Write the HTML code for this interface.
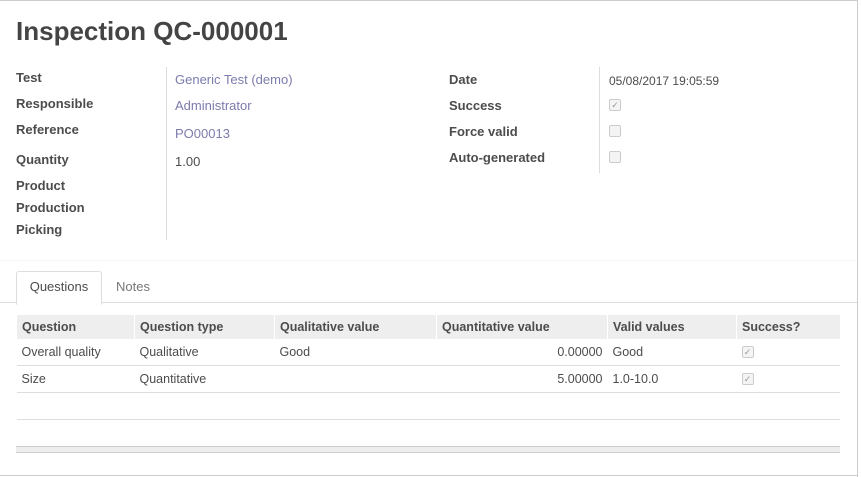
<!DOCTYPE html><html><head><style>
body{margin:0;width:861px;height:477px;background:#fff;font-family:"Liberation Sans",sans-serif;font-size:13px;color:#4c4c4c;position:relative;overflow:hidden}
.a{position:absolute}
.l{font-weight:bold;color:#4c4c4c}
.v{color:#7c7bad}
.cb{width:10px;height:10px;border:1px solid #ccc;border-radius:2px;background:#f4f4f4}
table{border-collapse:collapse;font-size:12.5px;table-layout:fixed}
td,th{padding:0 5px;text-align:left;white-space:nowrap;overflow:hidden}
th{background:#eee;height:24px;font-weight:bold;border-left:1px solid #fff}
td{height:26px;border-bottom:1px solid #ddd}
</style></head><body>
<div class="a" style="left:0;top:0;width:857px;height:1px;background:#ccc"></div>
<div class="a" style="left:857px;top:0;width:1px;height:477px;background:#ccc"></div>
<div class="a" style="left:0;top:475px;width:858px;height:1px;background:#ccc"></div>
<div class="a" style="left:0;top:260px;width:857px;height:1px;background:#f4f4f4"></div>
<div class="a" style="left:16px;top:16px;font-size:26px;font-weight:bold;color:#444">Inspection QC-000001</div>
<div class="a" style="left:166px;top:67px;width:1px;height:173px;background:#ddd"></div>
<div class="a" style="left:599px;top:67px;width:1px;height:106px;background:#ddd"></div>
<div class="a l" style="left:16px;top:70px">Test</div>
<div class="a l" style="left:16px;top:96px">Responsible</div>
<div class="a l" style="left:16px;top:122px">Reference</div>
<div class="a l" style="left:16px;top:152px">Quantity</div>
<div class="a l" style="left:16px;top:178px">Product</div>
<div class="a l" style="left:16px;top:200px">Production</div>
<div class="a l" style="left:16px;top:222px">Picking</div>
<div class="a v" style="left:175px;top:72px">Generic Test (demo)</div>
<div class="a v" style="left:175px;top:98px">Administrator</div>
<div class="a v" style="left:175px;top:126px">PO00013</div>
<div class="a" style="left:175px;top:154px">1.00</div>
<div class="a l" style="left:449px;top:72px">Date</div>
<div class="a l" style="left:449px;top:98px">Success</div>
<div class="a l" style="left:449px;top:124px">Force valid</div>
<div class="a l" style="left:449px;top:150px">Auto-generated</div>
<div class="a" style="left:609px;top:74px;font-size:12px">05/08/2017 19:05:59</div>
<div class="a cb" style="left:609px;top:99px;font-size:9px;line-height:10px;text-align:center;color:#999">✓</div>
<div class="a cb" style="left:609px;top:125px"></div>
<div class="a cb" style="left:609px;top:151px"></div>
<div class="a" style="left:0;top:302px;width:857px;height:1px;background:#ddd"></div>
<div class="a" style="left:16px;top:271px;width:84px;height:32px;border:1px solid #ddd;border-bottom:1px solid #fff;border-radius:3px 3px 0 0;background:#fff;text-align:center;line-height:30px">Questions</div>
<div class="a" style="left:116px;top:279px;color:#777">Notes</div>
<table class="a" style="left:16px;top:315px;width:824px">
<tr><th style="width:107px">Question</th><th style="width:129px">Question type</th><th style="width:151px">Qualitative value</th><th style="width:160px">Quantitative value</th><th style="width:118px">Valid values</th><th>Success?</th></tr>
<tr><td>Overall quality</td><td>Qualitative</td><td>Good</td><td style="text-align:right">0.00000</td><td>Good</td><td><div class="cb" style="font-size:9px;line-height:10px;text-align:center;color:#999">✓</div></td></tr>
<tr><td>Size</td><td>Quantitative</td><td></td><td style="text-align:right">5.00000</td><td>1.0-10.0</td><td><div class="cb" style="font-size:9px;line-height:10px;text-align:center;color:#999">✓</div></td></tr>
<tr><td colspan="6"></td></tr>
</table>
<div class="a" style="left:16px;top:446px;width:824px;height:7px;background:#eee;border-top:1px solid #ccc;border-bottom:1px solid #ccc;box-sizing:border-box"></div>
</body></html>
